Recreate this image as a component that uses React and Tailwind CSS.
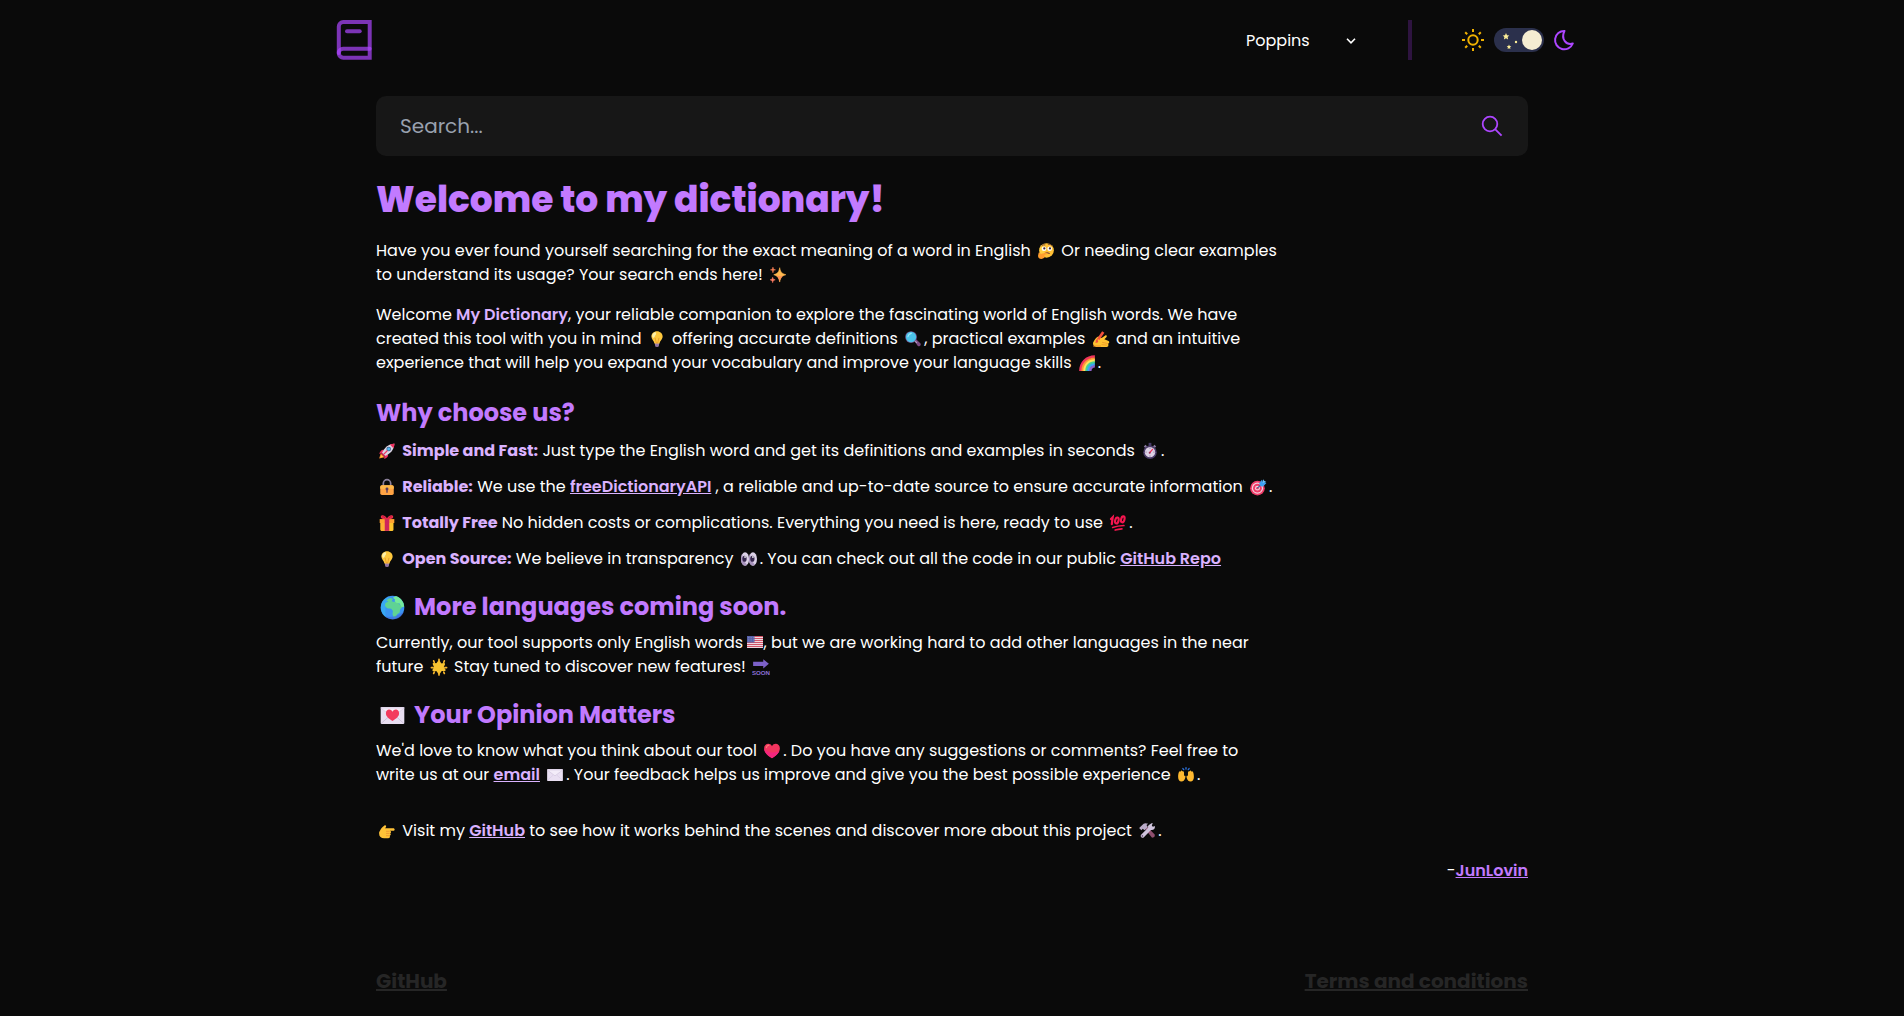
const EMOJI = {
  thinking: (
    <>
      <circle cx="17" cy="15" r="13" fill="#ffc035" />
      <path d="M10 4.500Q4 8 4 15q0 6 4 9l6-2Z" fill="#ffd64a" opacity=".7" />
      <circle cx="12.500" cy="12" r="4.200" fill="#fff" />
      <circle cx="22.500" cy="12" r="4.200" fill="#fff" />
      <circle cx="13" cy="11.500" r="2" fill="#402a32" />
      <circle cx="23" cy="11.500" r="2" fill="#402a32" />
      <path d="M8.500 6.500Q10.500 4 14 5M20 4q4-.8 6 2" stroke="#6d4034" strokeWidth="1.500" fill="none" strokeLinecap="round" />
      <path d="M14 20.500q4-3 8 0" stroke="#7a3b35" strokeWidth="1.800" fill="none" strokeLinecap="round" />
      <path d="M3 19c1.600-1 3 .5 3 2.500l10-2.300c2-.4 2.600 2 .8 2.700l-4.300 1.800c3 1.500 1 6.300-4.500 6.300-5 0-6.500-3-6-6.500Z" fill="#ff9d2e" />
    </>
  ),
  sparkles: (
    <>
      <path d="M19 3c1.500 8 4 10.500 11 12.500-7 2-9.500 5-11 13-1.500-8-4-11-10.500-13C15 13.500 17.500 11 19 3Z" fill="#ffb84e" stroke="#ffb84e" strokeWidth="1" />
      <path d="M19 18c5 0 7-1.500 11-2.500-7 2-9.500 5-11 13-1.500-7-3.500-10-7.500-12Z" fill="#ff8f57" />
      <path d="M7 2c.5 3 1.500 4 4.500 4.800C8.500 7.500 7.500 8.500 7 12c-.5-3.500-1.500-4.500-4.500-5.200C5.500 6 6.500 5 7 2Z" fill="#f47c52" stroke="#f47c52" />
      <path d="M6.500 20c.5 3 1.500 4 4.500 4.600-3 .8-4 1.900-4.500 5-.5-3.100-1.500-4.200-4.500-5C5 24 6 23 6.500 20Z" fill="#ff7d63" stroke="#ff7d63" />
    </>
  ),
  bulb: (
    <>
      <path d="M12 22h8l-.8 6.500c-.2 2-6.200 2-6.400 0Z" fill="#a88bb8" />
      <path d="M12 25h8M12.500 27.800h7" stroke="#765b8d" strokeWidth="1" />
      <path d="M16 2C10.500 2 6 6 6 11.500c0 5 4.500 7 5.500 12.500h9C21.500 18.500 26 16.500 26 11.500 26 6 21.500 2 16 2Z" fill="#ffc83d" />
      <path d="M13 3.500c-4 1-6 4.500-5.500 8 .5 3 3.500 3 4.500 0 .8-2.500 4.500-4.500 1-8Z" fill="#fff1a8" />
      <path d="m12.500 14 2.200 9h2.600l2.200-9" stroke="#e68a25" strokeWidth="1.200" fill="none" />
    </>
  ),
  magnifier: (
    <>
      <path d="m18 19 3-3 8 7.600c2.600 2.600-1.700 7.300-4.400 4.800Z" fill="#7b4a82" />
      <path d="m18.500 18.500 4.500 4.500" stroke="#b7a4c5" strokeWidth="2" />
      <circle cx="12.500" cy="12.500" r="10.500" fill="#6f5089" />
      <circle cx="12.500" cy="12.500" r="9.200" fill="#4bc3ea" />
      <path d="M7 12q1-5 6-6" stroke="#9ae6fa" strokeWidth="2" fill="none" strokeLinecap="round" />
    </>
  ),
  writing: (
    <>
      <path d="M2 22c3-5 6-10 9-10.500l6 2.500 6-4c3-1.500 4.500.5 2.500 2.700L22 16.500l7.500 3c2 1.200 1.500 4-.5 4.500v4c0 1-1 2-3 2H9c-5 0-8-4-7-8Z" fill="#ffc331" />
      <path d="m18 22 10 2M17 26l10 1" stroke="#e78d29" strokeWidth="1.200" />
      <path d="m6 23 4-1L22 5l-4-3L7 18Z" fill="#f4513c" />
      <path d="M2 28.500h14" stroke="#ef8a2b" strokeWidth="1.600" />
      <path d="m10 16 5 2.500-4 3" fill="#ffc331" />
    </>
  ),
  rainbow: (
    <>
      <path d="M2 30C2 14 14 2 30 2v4.500C17 6.500 7 16.500 7 30Z" fill="#f2355c" />
      <path d="M6 30C6 16 16 6 30 6v4.500C19 10.500 11 18.500 11 30Z" fill="#ff9838" />
      <path d="M9.500 30C9.500 18 18 9.500 30 9.500V14c-9 0-16 7-16 16Z" fill="#ffe25c" />
      <path d="M13 30c0-10 7-17 17-17v4.500c-7 0-12.500 5.500-12.500 12.500Z" fill="#43d393" />
      <path d="M16.500 30c0-8 5.500-13.500 13.500-13.500V21c-5 0-9 4-9 9Z" fill="#3aa5f4" />
      <path d="M20 30c0-6 4-10 10-10v4c-3.500 0-6 2.500-6 6Z" fill="#8c61c9" />
    </>
  ),
  rocket: (
    <>
      <path d="m5 20-3 9.500 10-2.500Z" fill="#ff8a2e" />
      <path d="m6 23-2 5 5-2Z" fill="#ffd04a" />
      <path d="M10 14c-4-.5-6 3-8 7l7-1ZM18 22c.5 4-2.500 6-7 8l1-7Z" fill="#ef3163" />
      <path d="M7 20C11 10 18 3.500 29 3c-.5 11-7 18-17 22Z" fill="#dcd5e5" />
      <path d="M21 4.500Q25 3 29.500 2.500 29 7 27.500 11Z" fill="#f0305e" />
      <circle cx="19" cy="12.500" r="4" fill="#42638f" />
      <circle cx="19" cy="12.500" r="2.700" fill="#4fb8f2" />
      <path d="m6.500 18.500 7 7-2.500 1-5.500-5.500Z" fill="#c72754" />
      <path d="m10 22 6-6" stroke="#ed3460" strokeWidth="2.200" strokeLinecap="round" />
    </>
  ),
  stopwatch: (
    <>
      <path d="M13.500 1.500h5V7h-5Z" fill="#463b67" />
      <path d="m5 8 3-3 3 3-3 3ZM21 8l3-3 3 3-3 3Z" fill="#8a7a9e" />
      <circle cx="16" cy="18" r="12" fill="#4b3c68" />
      <circle cx="16" cy="18" r="9.200" fill="#ddd2e6" />
      <path d="M16 10v2M16 24v2M8 18h2M22 18h2" stroke="#756584" strokeWidth="1.400" />
      <path d="m15.500 19 5-6" stroke="#ef2f58" strokeWidth="2.200" strokeLinecap="round" />
      <circle cx="15.500" cy="19" r="1.800" fill="#9b3558" />
    </>
  ),
  lock: (
    <>
      <path d="M9.500 15V9.500a6.500 6.500 0 0 1 13 0V15" stroke="#8b809b" strokeWidth="3" fill="none" />
      <rect x="4" y="13" width="24" height="17" rx="3" fill="#ffa344" />
      <path d="M4 16q0-3 3-3h18q3 0 3 3v3H4Z" fill="#ffb84a" />
      <circle cx="16" cy="19.500" r="2.600" fill="#583d5e" />
      <path d="M14.800 20h2.400v6h-2.400Z" fill="#583d5e" />
    </>
  ),
  target: (
    <>
      <circle cx="15" cy="18" r="13" fill="#ef3b67" />
      <circle cx="15" cy="18" r="10" fill="#f3d2de" />
      <circle cx="15" cy="18" r="7.800" fill="#ef3b67" />
      <circle cx="15" cy="18" r="4.400" fill="#f3d2de" />
      <circle cx="15" cy="18" r="2.200" fill="#ef3b67" />
      <path d="m15 18 10-10" stroke="#27699f" strokeWidth="1.800" />
      <path d="M18 9.500 23 3l1.500 4L31 9l-6 6-4.500-.5Z" fill="#3da0f2" />
      <path d="m24 8 1-6 2 3 4 2-5 2Z" fill="#69c2fb" />
    </>
  ),
  gift: (
    <>
      <path d="M3 9h26v7H3Z" fill="#ffa331" />
      <path d="M4.500 16h23v12q0 2-2 2h-19q-2 0-2-2Z" fill="#ffc52e" />
      <path d="M4.500 16H15v14H6.500q-2 0-2-2Z" fill="#ffae34" />
      <path d="M12 9h8v21h-8Z" fill="#cf245c" />
      <path d="M16 9C9 10 4 8 5 4.500 6 0 14 2 16 8c2-6 10-8 11-3.500C28 8 23 10 16 9Z" fill="#f12e48" />
      <path d="M7.500 5q3-1 5.500 2M24.500 5q-3-1-5.500 2" stroke="#a81646" strokeWidth="1.400" fill="none" />
    </>
  ),
  hundred: (
    <g stroke="#f5164f" fill="none" strokeLinecap="round">
      <path d="m3.500 9 3-3-1.500 12" strokeWidth="4" />
      <ellipse cx="14" cy="11.500" rx="3" ry="5.400" transform="rotate(14 14 11.500)" strokeWidth="3.800" />
      <ellipse cx="24.500" cy="9.500" rx="3" ry="5.400" transform="rotate(14 24.500 9.500)" strokeWidth="3.800" />
      <path d="M6.500 24q9-3 20-3.500M11 28.500q5-1.800 12-2.200" strokeWidth="3" />
    </g>
  ),
  eyes: (
    <>
      <ellipse cx="9" cy="16" rx="7.200" ry="12" fill="#ddd2e8" />
      <ellipse cx="23" cy="16" rx="7.200" ry="12" fill="#ddd2e8" />
      <path d="M4 25.500Q1.800 22 1.800 16T4 6.500q-.5 10 8.500 19.500-4 3.500-8.500-.5ZM18 25.500q-2.200-3.500-2.200-9.500T18 6.500q-.5 10 8.500 19.500-4 3.500-8.500-.5Z" fill="#a994be" />
      <ellipse cx="8" cy="15.500" rx="3.800" ry="5.500" fill="#35264c" />
      <ellipse cx="22" cy="15.500" rx="3.800" ry="5.500" fill="#35264c" />
      <ellipse cx="9" cy="12.500" rx="1.400" ry="1.800" fill="#fff" />
      <ellipse cx="23" cy="12.500" rx="1.400" ry="1.800" fill="#fff" />
    </>
  ),
  globe: (
    <>
      <circle cx="16" cy="16" r="14" fill="#3b94f2" />
      <path d="M4 9a14 14 0 0 0 4 18.500Q6 15 12 3 7 4.500 4 9Z" fill="#37b6f5" opacity=".6" />
      <path d="M8.500 8 11 5.500l3-.8 2.500 1.300-1.500 2.500 3 1 3-1 4 4.500 3.500 1.500-3.500 4-.5 3.500-3 2-1.500 3.500-2.500.5-1.500-4 .5-4-2-2.500-5-.5-2.500-3 .5-3 3.500-2.500Z" fill="#5fd394" />
      <path d="m16.500 4.500 3.500-2Q26 4.200 29 10.800l.8 4.200-2.800.5-3-4.500-3.500-.5-2-2 .5-2Z" fill="#74eb9b" />
      <path d="M7 26.500q9 3 22.500-5.500A14 14 0 0 1 7 26.500Z" fill="#4169db" opacity=".6" />
    </>
  ),
  star: (
    <>
      <path d="m16 6 3 5.500 6-.7-2.500 5.200L26 21.500l-6-.2L16 27l-3.500-5.700-6.500.5 3-5.500L6.500 10.500l6 .5Z" fill="#f7c331" stroke="#f7c331" strokeWidth="3.500" strokeLinejoin="round" />
      <g stroke="#f5b52d" strokeWidth="3" strokeLinecap="round">
        <path d="M16 2.500v3M6.500 5l1 2.500M25.500 5l-1 2.500M2.500 17h3M29.500 17h-3M6.500 27.500l1-2.500M25.500 27.500l-1-2.500M16 30v-3" />
      </g>
    </>
  ),
  soon: (
    <>
      <path d="M2 6.500h18V2l10 8-10 8.500V14H2Z" fill="#7c61c9" />
      <text x="16" y="31" textAnchor="middle" fontSize="11" fontWeight="700" fill="#8a6fd6" fontFamily="Liberation Sans, sans-serif">SOON</text>
    </>
  ),
  loveLetter: (
    <>
      <rect x="2" y="6" width="28" height="20" rx="1.200" fill="#e9dff2" />
      <path d="m2.500 25.500 10-9M29.500 25.500l-10-9" stroke="#c9bcd8" strokeWidth="1" />
      <path d="M2 7h28L16 18Z" fill="#f3ecf8" stroke="#d5c9e2" strokeWidth=".8" />
      <path d="M16 22.500C11 19 8.200 17 8.200 13.200c0-5 5.800-5.500 7.800-1.700 2-3.800 7.800-3.300 7.800 1.700 0 3.800-2.800 5.800-7.800 9.300Z" fill="#f33a5e" />
    </>
  ),
  heart: (
    <>
      <path d="M16 29C7 23 2 17.500 2 11 2 2.500 12.500.5 16 7.500 19.500.5 30 2.500 30 11c0 6.500-5 12-14 18Z" fill="#f2355f" />
      <path d="M16 29C7 23 2 17.500 2 11c3 6 12 11 27 5.500C27 21 22.500 25 16 29Z" fill="#f5257e" />
      <path d="M6 10q.5-4 4.500-4.500" stroke="#ff7c73" strokeWidth="2" fill="none" strokeLinecap="round" />
    </>
  ),
  envelope: (
    <>
      <rect x="2" y="5.500" width="28" height="21" rx="1.200" fill="#e9dff2" />
      <path d="m2.500 25.500 10-9M29.500 25.500l-10-9" stroke="#d5c8e2" strokeWidth="1" />
      <path d="M2 7h28L16 17.500Z" fill="#f3ecf9" stroke="#c8b9d6" strokeWidth=".9" />
    </>
  ),
  hands: (
    <>
      <path d="M13.500 17c2 0 2 2.500.8 5-1.300 3-3 5.500-6.300 5.500-4 0-6-3.500-6-8 0-4 .5-8 2-9.500 1-1 2-.5 2.300.3C7 7.500 9 7.500 9.300 9.500c1.700-1 3.200.5 3.200 2.500V18Z" fill="#ffb930" />
      <path d="M18.500 17c-2 0-2 2.500-.8 5 1.300 3 3 5.500 6.300 5.500 4 0 6-3.500 6-8 0-4-.5-8-2-9.500-1-1-2-.5-2.300.3C25 7.500 23 7.500 22.700 9.500c-1.700-1-3.200.5-3.200 2.500V18Z" fill="#ffb930" />
      <path d="m10.500 4.500 1.500 2M21.500 4.500 20 6.500M16 3v2.500" stroke="#2d73dd" strokeWidth="2.400" strokeLinecap="round" />
    </>
  ),
  pointing: (
    <>
      <path d="M2 18c2-4 5-9.500 9-11.500 2.500-1.500 4.500.5 3 2.800L12.500 11H27c3.500 0 3.500 4.500 0 4.500h-6c3 .5 3 4 .5 4.500 2 1 1.500 4-.8 4.300 1.500 1.500 0 4.700-2.700 4.700h-7C5.500 29 2 26 2 21Z" fill="#ffc238" />
      <path d="M20 16.500h-5M20 20.300h-5M19.500 24.300h-4.500" stroke="#e98a31" strokeWidth="1.300" strokeLinecap="round" />
    </>
  ),
  tools: (
    <>
      <path d="m13 12 4-4 12 14.500c2 3-2.500 7.500-5.500 5Z" transform="rotate(-4 20 18)" fill="#8e4f6e" />
      <path d="M2 10.500 10 3q3-2 8 0l-3 2.500 2.500 3.500-6 5.500L8.500 12 6 14.500Z" fill="#b9abc8" />
      <path d="M22 3.500c3-2 4-1.500 4-1.500l-1.500 4.500 2 2L30 7c1 5-3 8-7 7L10.500 27c-2.500 3-7.500-1-5-4.500L18 10c-1-3 1-5 4-6.500Z" fill="#cfc3dc" />
      <circle cx="7.800" cy="24.800" r="1.500" fill="#6a5578" />
    </>
  ),
};

function Emoji({ name }) {
  return (
    <svg viewBox="0 0 32 32" aria-hidden="true" className="mx-0.5 inline-block size-[18px] align-[-4px]">
      {EMOJI[name]}
    </svg>
  );
}

function HeadingEmoji({ name }) {
  return (
    <svg viewBox="0 0 32 32" aria-hidden="true" className="mx-[3px] inline-block size-[27px] align-[-6px]">
      {EMOJI[name]}
    </svg>
  );
}

function UsFlag() {
  return (
    <svg viewBox="0 0 32 24" aria-hidden="true" className="inline-block h-3 w-4 align-[0px]">
      <rect width="32" height="24" rx="1" fill="#eed9e0" />
      <path d="M0 1h32M0 5h32M0 9h32M0 13h32M0 17h32M0 21h32" stroke="#cf5468" strokeWidth="2" />
      <rect width="15" height="13" fill="#5661a8" />
      <path d="M2 3h12M2 6.500h12M2 10h12" stroke="#a3a8d6" strokeWidth="1.200" strokeDasharray="1.400 2" />
    </svg>
  );
}

function Label({ children }) {
  return <strong className="font-bold text-purple-300">{children}</strong>;
}

function TextLink({ children }) {
  return (
    <a href="#" className="font-semibold text-purple-300 underline">
      {children}
    </a>
  );
}

function BookLogo() {
  return (
    <svg viewBox="0 0 36 40" className="h-10 w-9" fill="none" stroke="#ad46ff" strokeWidth="4" strokeLinecap="round" aria-hidden="true">
      <path d="M2.800 33.500V6.500A4.500 4.500 0 0 1 7.300 2H33.700V37.700H7.300A4.500 4.500 0 0 1 2.800 33.500Z" opacity=".7" />
      <path d="M2.800 33A4.300 4.300 0 0 1 7.300 28.700H33.700" opacity=".7" />
      <path d="M11 11.300H23.700" opacity=".7" />
    </svg>
  );
}

function Header() {
  return (
    <header className="mx-auto flex h-20 w-full max-w-7xl items-center justify-between px-4">
      <a href="#" aria-label="Home" className="ml-2">
        <BookLogo />
      </a>
      <div className="flex items-center">
        <div className="relative mr-[50px] flex items-center">
          <select aria-label="Font" defaultValue="poppins" className="w-28 cursor-pointer appearance-none bg-transparent pt-0.5 text-base text-white outline-none">
            <option value="poppins">Poppins</option>
          </select>
          <svg viewBox="0 0 10 6" className="pointer-events-none absolute right-0.5 mt-0.5 h-1.5 w-2.5" fill="none" stroke="#fff" strokeWidth="1.600" aria-hidden="true">
            <path d="m1 .8 4 4 4-4" />
          </svg>
        </div>
        <div className="h-10 w-1 bg-[#2e1440]" />
        <div className="ml-[49px] flex items-center gap-2">
          <svg viewBox="0 0 24 24" className="mr-px size-6" fill="none" stroke="#f0b100" strokeWidth="2" aria-hidden="true">
            <circle cx="12" cy="12" r="4.700" />
            <path d="M12 1v3M12 20v3M1 12h3M20 12h3M4.200 4.200l2 2M17.800 17.800l2 2M4.200 19.800l2-2M17.800 6.200l2-2" />
          </svg>
          <label className="relative block h-6 w-[50px] cursor-pointer">
            <input type="checkbox" defaultChecked aria-label="Dark mode" className="absolute inset-0 size-full cursor-pointer appearance-none rounded-full bg-[#2b304c]" />
            <svg viewBox="0 0 50 24" className="pointer-events-none absolute inset-0" fill="#fdee98" aria-hidden="true">
              <path d="m12 5 1 2.200 2.300.3-1.700 1.600.5 2.400-2.100-1.200-2.100 1.200.5-2.400-1.700-1.600 2.300-.3Z" />
              <path d="m15 16.500.7 1.500 1.600.2-1.200 1.100.3 1.700-1.400-.8-1.400.8.3-1.700-1.200-1.100 1.600-.2Z" />
              <circle cx="22" cy="14" r="1.200" />
              <circle cx="38" cy="12" r="10" fill="#f5edd2" />
            </svg>
          </label>
          <svg viewBox="0 0 24 24" className="size-6" fill="none" stroke="#ad46ff" strokeWidth="2" strokeLinejoin="round" aria-hidden="true">
            <path d="M12.500 2.900A9.200 9.200 0 1 0 20.800 15.500C14.500 17.500 8.500 11.500 12.500 2.900Z" />
          </svg>
        </div>
      </div>
    </header>
  );
}

export default function App() {
  return (
    <div className="min-h-screen bg-neutral-950 font-['Poppins','Noto_Sans',sans-serif] text-base text-white">
      <Header />
      <div className="mx-auto w-full max-w-6xl">
        <form className="mt-4 flex h-15 items-center rounded-[10px] bg-neutral-900 px-6">
          <input type="text" aria-label="Search" placeholder="Search..." className="min-w-0 flex-1 bg-transparent text-xl outline-none placeholder:text-gray-400" />
          <button type="button" aria-label="Search" className="cursor-pointer">
            <svg viewBox="0 0 24 24" className="size-6" fill="none" stroke="#ad46ff" strokeWidth="1.800" aria-hidden="true">
              <circle cx="10" cy="10" r="7.300" />
              <path d="m15.300 15.300 6.300 6.300" />
            </svg>
          </button>
        </form>

        <main>
          <div className="max-w-[902px]">
            <h1 className="mt-6 text-4xl font-extrabold text-purple-400">Welcome to my dictionary!</h1>
            <p className="mt-[19px]">
              Have you ever found yourself searching for the exact meaning of a word in English <Emoji name="thinking" /> Or needing clear examples to understand its usage? Your search ends here! <Emoji name="sparkles" />
            </p>
            <p className="mt-4">
              Welcome <strong className="font-semibold text-purple-300">My Dictionary</strong>, your reliable companion to explore the fascinating world of English words. We have created this tool with you in mind <Emoji name="bulb" /> offering accurate definitions <Emoji name="magnifier" />, practical examples <Emoji name="writing" /> and an intuitive experience that will help you expand your vocabulary and improve your language skills <Emoji name="rainbow" />.
            </p>

            <h2 className="mt-[22px] text-2xl font-bold text-purple-400">Why choose us?</h2>
            <ul className="mt-2.5 flex flex-col gap-3">
              <li>
                <Emoji name="rocket" /> <Label>Simple and Fast:</Label> Just type the English word and get its definitions and examples in seconds <Emoji name="stopwatch" />.
              </li>
              <li>
                <Emoji name="lock" /> <Label>Reliable:</Label> We use the <TextLink>freeDictionaryAPI</TextLink> , a reliable and up-to-date source to ensure accurate information <Emoji name="target" />.
              </li>
              <li>
                <Emoji name="gift" /> <Label>Totally Free</Label> No hidden costs or complications. Everything you need is here, ready to use <Emoji name="hundred" />.
              </li>
              <li>
                <Emoji name="bulb" /> <Label>Open Source:</Label> We believe in transparency <Emoji name="eyes" />. You can check out all the code in our public <TextLink>GitHub Repo</TextLink>
              </li>
            </ul>

            <h2 className="mt-5 text-2xl font-bold text-purple-400">
              <HeadingEmoji name="globe" /> More languages coming soon.
            </h2>
            <p className="mt-2">
              Currently, our tool supports only English words <UsFlag />, but we are working hard to add other languages in the near future <Emoji name="star" /> Stay tuned to discover new features! <Emoji name="soon" />
            </p>

            <h2 className="mt-5 text-2xl font-bold text-purple-400">
              <HeadingEmoji name="loveLetter" /> Your Opinion Matters
            </h2>
            <p className="mt-2">
              We'd love to know what you think about our tool <Emoji name="heart" />. Do you have any suggestions or comments? Feel free to write us at our <TextLink>email</TextLink> <Emoji name="envelope" />. Your feedback helps us improve and give you the best possible experience <Emoji name="hands" />.
            </p>
            <p className="mt-8">
              <Emoji name="pointing" /> Visit my <TextLink>GitHub</TextLink> to see how it works behind the scenes and discover more about this project <Emoji name="tools" />.
            </p>
          </div>
          <p className="mt-4 text-right">
            -<a href="#" className="font-semibold text-purple-400 underline">JunLovin</a>
          </p>
        </main>

        <footer className="mt-21 flex justify-between pb-5 text-xl font-bold text-neutral-800">
          <a href="#" className="underline">GitHub</a>
          <a href="#" className="underline">Terms and conditions</a>
        </footer>
      </div>
    </div>
  );
}
